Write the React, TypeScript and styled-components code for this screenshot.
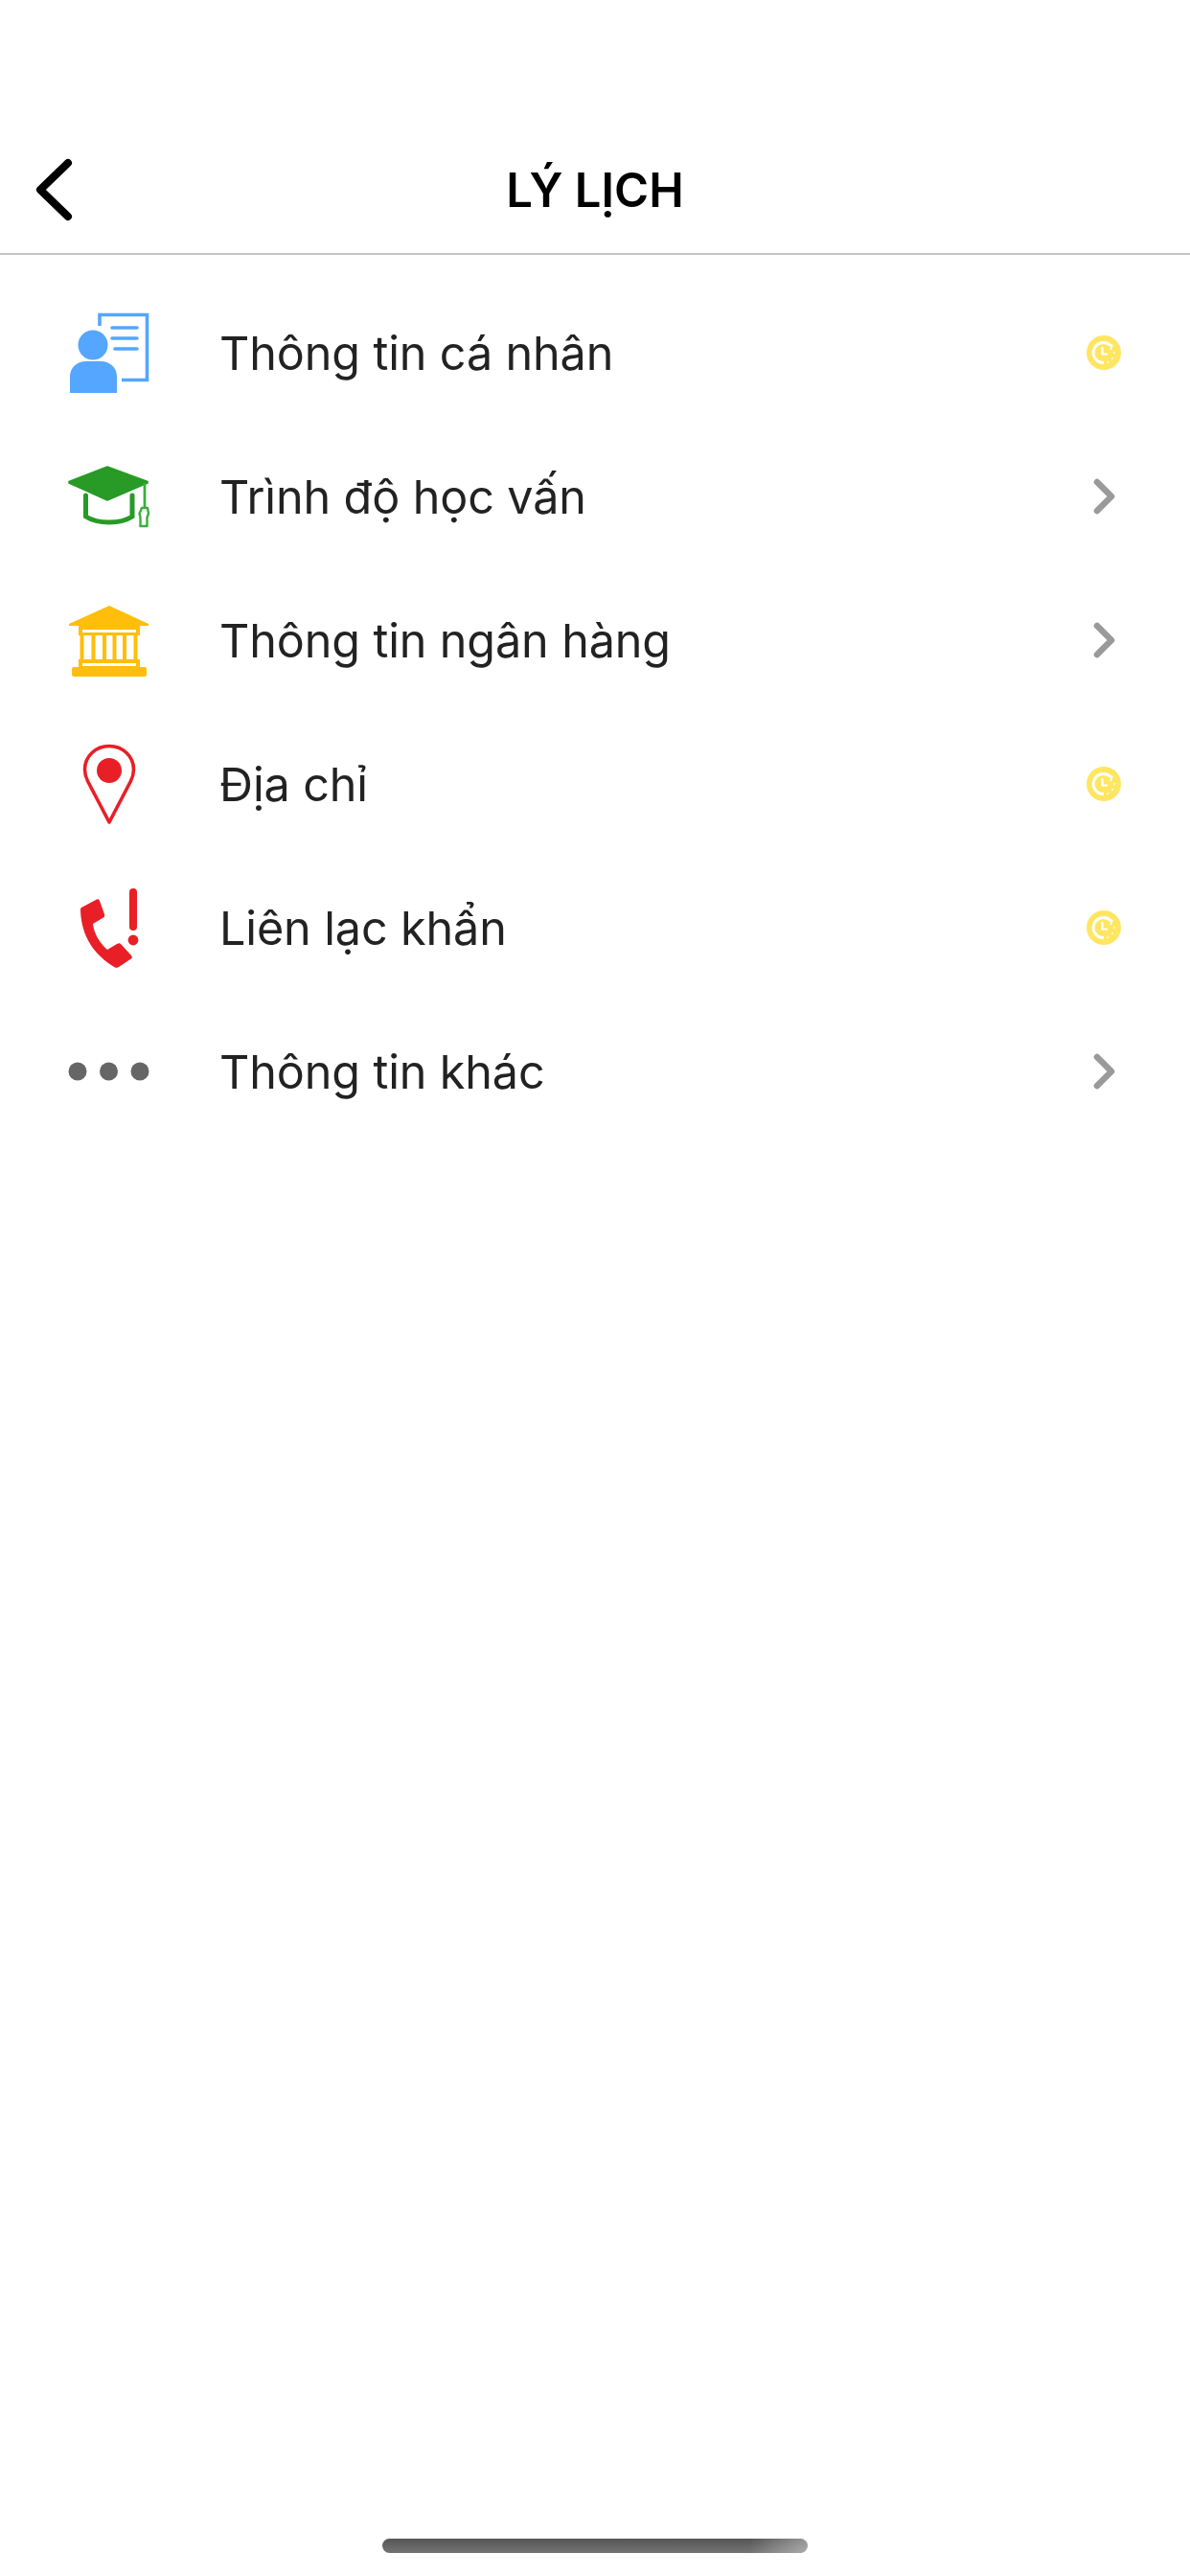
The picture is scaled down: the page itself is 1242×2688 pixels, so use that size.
import React from 'react';
import styled, { createGlobalStyle } from 'styled-components';

const GlobalStyle = createGlobalStyle`
  html, body {
    margin: 0;
    padding: 0;
    background-color: #ffffff;
  }

  * {
    box-sizing: border-box;
  }
`;

const Screen = styled.div`
  display: flex;
  flex-direction: column;
  width: 1242px;
  height: 2688px;
  font-family: 'Inter', 'Liberation Sans', sans-serif;
  background-color: #ffffff;
`;

const Header = styled.header`
  display: grid;
  grid-template-columns: 100px 1fr 100px;
  align-items: center;
  height: 266px;
  padding-top: 132px;
  border-bottom: 2px solid #c4c4c4;
`;

const BackButton = styled.button`
  display: flex;
  align-items: center;
  width: 100%;
  height: 70px;
  padding: 0 0 0 36px;
  border: 0;
  background: none;
`;

const Title = styled.h1`
  margin: 0;
  color: #000000;
  font-size: 49px;
  font-weight: 600;
  text-align: center;
`;

const MenuList = styled.ul`
  display: flex;
  flex-direction: column;
  margin: 0;
  padding: 27px 0 0;
  list-style: none;
`;

const MenuRow = styled.li`
  display: flex;
  align-items: center;
  height: 150px;
  padding: 0 70px 0 64px;
`;

const IconBox = styled.span`
  display: flex;
  align-items: center;
  justify-content: center;
  flex: none;
  width: 100px;
  height: 100px;
`;

const RowLabel = styled.span`
  flex: 1;
  margin-left: 65px;
  color: #222222;
  font-size: 48.5px;
  font-weight: 400;
  letter-spacing: -0.12px;
`;

const TrailingBox = styled.span`
  display: flex;
  align-items: center;
  justify-content: center;
  flex: none;
  width: 40px;
  height: 40px;
`;

const HomeIndicator = styled.div`
  align-self: center;
  width: 444px;
  height: 15px;
  margin-top: auto;
  margin-bottom: 24px;
  border-radius: 8px;
  background:
    linear-gradient(100deg, rgba(255, 255, 255, 0) 86%, rgba(255, 255, 255, 0.4) 100%),
    linear-gradient(180deg, #555555 0%, #747474 100%);
`;

const ProfileIcon = () => (
  <svg width="100" height="100" viewBox="0 0 100 100" fill="none">
    <path d="M40 22V10.5H89.5V78.5H63" stroke="#54a6ff" strokeWidth="3.6" />
    <path d="M53 24H79M53 35H79M56 46H79" stroke="#54a6ff" strokeWidth="3.6" strokeLinecap="round" />
    <circle cx="33" cy="42" r="15.5" fill="#54a6ff" />
    <path d="M9 92V75C9 65 17 59 26 59H41C50 59 58 65 58 75V92Z" fill="#54a6ff" />
  </svg>
);

const EducationIcon = () => (
  <svg width="100" height="100" viewBox="0 0 100 100" fill="none">
    <path d="M48 19L90 34.5V36L48 54L8 36V34.5Z" fill="#289a26" strokeLinejoin="round" stroke="#289a26" strokeWidth="1.5" />
    <path d="M25.5 49V71C38 79 62 79 74 71V49" stroke="#289a26" strokeWidth="5" strokeLinecap="round" />
    <path d="M87 36V62" stroke="#3cae3a" strokeWidth="2.8" />
    <path d="M84 62H90L91 68L89.5 72V81H82.5V72L81.5 68Z" stroke="#3cae3a" strokeWidth="2.4" strokeLinejoin="round" />
  </svg>
);

const BankIcon = () => (
  <svg width="100" height="100" viewBox="0 0 100 100" fill="none">
    <path d="M50 14L91 33V35H8V33Z" fill="#ffbe0b" />
    <path d="M18 35H82V45H18Z" fill="#ffbe0b" />
    <rect x="22" y="39" width="56" height="3" fill="#ffffff" />
    <path d="M21.5 45V70M33.5 45V70M45 45V70M55.5 45V70M66 45V70M77.5 45V70" stroke="#ffbe0b" strokeWidth="4" />
    <path d="M18 70H82V79H18Z" fill="#ffbe0b" />
    <rect x="22" y="74" width="56" height="3" fill="#ffffff" />
    <rect x="11" y="78" width="78" height="10" rx="2" fill="#ffbe0b" />
  </svg>
);

const PinIcon = () => (
  <svg width="100" height="100" viewBox="0 0 100 100" fill="none">
    <path
      d="M50 90L27.5 47C25 42 24.5 38 24.5 35C24.5 21 36 10.5 50 10.5C64 10.5 75.5 21 75.5 35C75.5 38 75 42 72.5 47Z"
      stroke="#e81f27"
      strokeWidth="3.6"
      strokeLinejoin="round"
    />
    <circle cx="50" cy="36" r="13" fill="#e81f27" />
  </svg>
);

const AlertPhoneIcon = () => (
  <svg width="100" height="100" viewBox="0 0 100 100" fill="none">
    <path
      d="M21 29L36 21C38 20 39 20 40 22L45 36C45.5 38 45 39 43 40L33 46C34 56 40 66 48 73L58 67C60 66 61 66 62 67L73 79C74.5 81 74 82 72 83L60 91C58 92 57 92 56 91.5C35 79 21 60 20 32C20 30 20 30 21 29Z"
      fill="#e81f27"
    />
    <rect x="71" y="9" width="8" height="44" rx="4" fill="#e81f27" />
    <circle cx="75" cy="63" r="5.4" fill="#e81f27" />
  </svg>
);

const MoreIcon = () => (
  <svg width="100" height="100" viewBox="0 0 100 100">
    <circle cx="17" cy="50" r="9.5" fill="#666666" />
    <circle cx="49.5" cy="50" r="9.5" fill="#666666" />
    <circle cx="82" cy="50" r="9.5" fill="#666666" />
  </svg>
);

const PendingBadge = () => (
  <svg width="36" height="36" viewBox="0 0 36 36" fill="none">
    <circle cx="18" cy="18" r="18" fill="#ffe662" />
    <path d="M25 10.5A10.5 10.5 0 1 0 18 28.5" stroke="#ffffff" strokeWidth="3" />
    <path d="M22 8.5L26.5 10.5L25 15" stroke="#ffffff" strokeWidth="2" />
    <path d="M16.5 12V19.5H22" stroke="#ffffff" strokeWidth="2.2" />
    <path d="M28 18H29.5M26.5 23.5L27.5 24.5M22 27.5L22.5 28.5" stroke="#ffffff" strokeWidth="2" />
  </svg>
);

const Chevron = () => (
  <svg width="40" height="40" viewBox="0 0 40 40" fill="none">
    <path d="M13 5L28 20L13 35" stroke="#9a9a9a" strokeWidth="6.6" strokeLinecap="round" strokeLinejoin="round" />
  </svg>
);

const rows = [
  { label: 'Thông tin cá nhân', icon: <ProfileIcon />, pending: true },
  { label: 'Trình độ học vấn', icon: <EducationIcon />, pending: false },
  { label: 'Thông tin ngân hàng', icon: <BankIcon />, pending: false },
  { label: 'Địa chỉ', icon: <PinIcon />, pending: true },
  { label: 'Liên lạc khẩn', icon: <AlertPhoneIcon />, pending: true },
  { label: 'Thông tin khác', icon: <MoreIcon />, pending: false },
];

const App: React.FC = () => (
  <React.Fragment>
    <GlobalStyle />
    <Screen>
      <Header>
        <BackButton aria-label="Back">
          <svg width="44" height="70" viewBox="0 0 44 70" fill="none">
            <path d="M35 7L6 35L35 63" stroke="#000000" strokeWidth="8" strokeLinecap="round" strokeLinejoin="round" />
          </svg>
        </BackButton>
        <Title>LÝ LỊCH</Title>
      </Header>
      <MenuList>
        {rows.map((row) => (
          <MenuRow key={row.label}>
            <IconBox>{row.icon}</IconBox>
            <RowLabel>{row.label}</RowLabel>
            <TrailingBox>{row.pending ? <PendingBadge /> : <Chevron />}</TrailingBox>
          </MenuRow>
        ))}
      </MenuList>
      <HomeIndicator />
    </Screen>
  </React.Fragment>
);

export default App;
